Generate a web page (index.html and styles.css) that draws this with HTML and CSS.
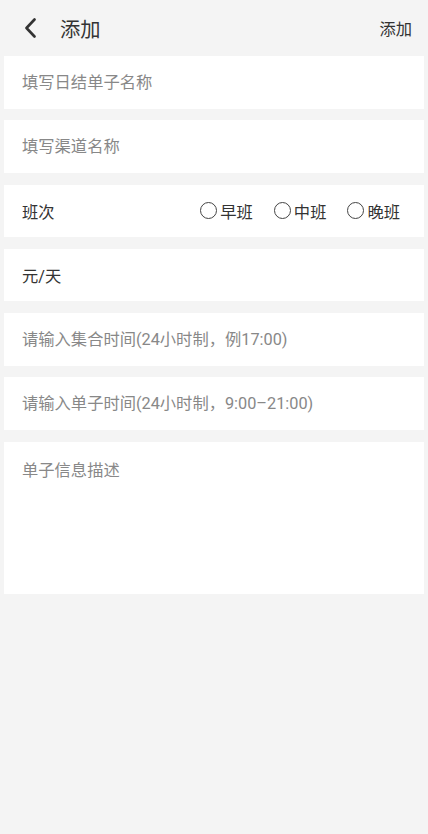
FILE: index.html
```html
<!DOCTYPE html>
<html lang="zh">
<head>
    <meta charset="UTF-8">
    <title>添加</title>
    <link rel="stylesheet" href="styles.css">
</head>
<body>
    <div class="header">
        <span class="back">
            <svg width="14" height="20" viewBox="0 0 14 20"><path d="M11.5 1.5 L3.5 10 L11.5 18.5" fill="none" stroke="#333" stroke-width="2.6" stroke-linecap="round" stroke-linejoin="round"/></svg>
        </span>
        <span class="title">添加</span>
        <span class="action">添加</span>
    </div>

    <div class="form">
        <div class="row"><input class="field" type="text" placeholder="填写日结单子名称"></div>
        <div class="row"><input class="field" type="text" placeholder="填写渠道名称"></div>
        <div class="row">
            <span class="label">班次</span>
            <div class="radios">
                <label class="radio"><span class="circle"></span>早班</label>
                <label class="radio"><span class="circle"></span>中班</label>
                <label class="radio"><span class="circle"></span>晚班</label>
            </div>
        </div>
        <div class="row"><span class="label">元/天</span></div>
        <div class="row"><input class="field" type="text" placeholder="请输入集合时间(24小时制，例17:00)"></div>
        <div class="row"><input class="field" type="text" placeholder="请输入单子时间(24小时制，9:00–21:00)"></div>
        <div class="row big"><textarea class="field area" placeholder="单子信息描述"></textarea></div>
    </div>
</body>
</html>
```

FILE: styles.css
```css
body { margin: 0; background: #f4f4f4; font-family: Roboto, "Noto Sans CJK SC", sans-serif; color: #333; }
.header { height: 56px; display: flex; align-items: center; padding: 0 16px 0 23px; }
.back { display: flex; align-items: center; width: 14px; margin-right: 23px; }
.title { font-size: 20.3px; color: #333; flex: 1; }
.action { font-size: 16.3px; color: #333; }
.form { display: flex; flex-direction: column; gap: 11.8px; padding: 0 4px; }
.row { background: #fff; height: 52.5px; display: flex; align-items: center; padding: 0 24px 0 18px; }
.row.big { height: 152px; align-items: flex-start; }
.field { border: none; outline: none; background: transparent; font-family: inherit; font-size: 16.3px; color: #333; width: 100%; padding: 0; }
.field::placeholder { color: #888; }
.area { resize: none; height: 100%; padding-top: 17px; line-height: 24px; }
.label { font-size: 16.3px; color: #333; flex: 1; }
.radios { display: flex; gap: 21px; }
.radio { display: flex; align-items: center; font-size: 16.3px; color: #333; }
.circle { width: 15px; height: 15px; border: 1.5px solid #444; border-radius: 50%; margin-right: 3px; }
```
